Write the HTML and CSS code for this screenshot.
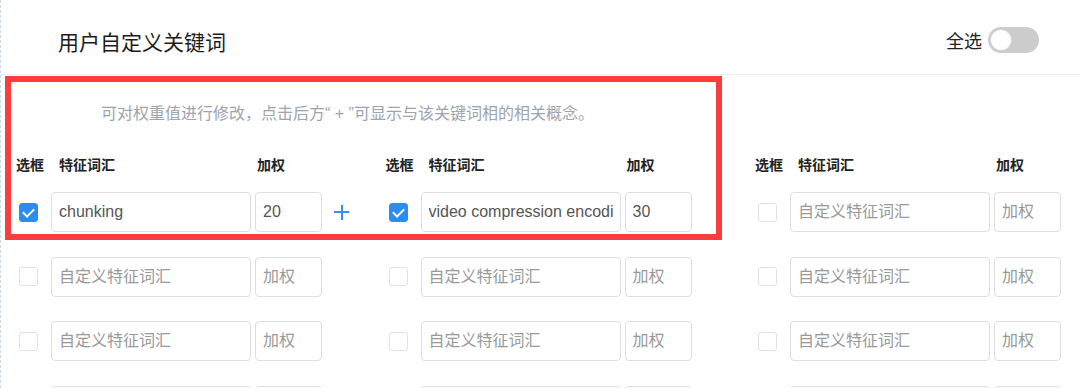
FILE: index.html
```html
<!DOCTYPE html>
<html lang="zh">
<head>
    <meta charset="UTF-8">
    <title>用户自定义关键词</title>
    <link rel="stylesheet" href="styles.css">
</head>
<body>
    <div class="page">
        <div class="header">
            <h2 class="title">用户自定义关键词</h2>
            <div class="select-all">
                <span>全选</span>
                <span class="switch"><span class="knob"></span></span>
            </div>
        </div>

        <div class="content">
            <p class="tip">可对权重值进行修改，点击后方“ + ”可显示与该关键词相的相关概念。</p>

            <div class="groups">
                <div class="group">
                    <div class="row head">
                        <span class="c-check">选框</span>
                        <span class="c-word">特征词汇</span>
                        <span class="c-weight">加权</span>
                    </div>
                    <div class="row">
                        <span class="c-check"><span class="box checked"></span></span>
                        <input class="word" type="text" value="chunking" placeholder="自定义特征词汇">
                        <input class="weight" type="text" value="20" placeholder="加权">
                        <span class="plus"></span>
                    </div>
                    <div class="row">
                        <span class="c-check"><span class="box"></span></span>
                        <input class="word" type="text" placeholder="自定义特征词汇">
                        <input class="weight" type="text" placeholder="加权">
                    </div>
                    <div class="row">
                        <span class="c-check"><span class="box"></span></span>
                        <input class="word" type="text" placeholder="自定义特征词汇">
                        <input class="weight" type="text" placeholder="加权">
                    </div>
                    <div class="row">
                        <span class="c-check"><span class="box"></span></span>
                        <input class="word" type="text" placeholder="自定义特征词汇">
                        <input class="weight" type="text" placeholder="加权">
                    </div>
                </div>

                <div class="group">
                    <div class="row head">
                        <span class="c-check">选框</span>
                        <span class="c-word">特征词汇</span>
                        <span class="c-weight">加权</span>
                    </div>
                    <div class="row">
                        <span class="c-check"><span class="box checked"></span></span>
                        <input class="word" type="text" value="video compression encoding" placeholder="自定义特征词汇">
                        <input class="weight" type="text" value="30" placeholder="加权">
                    </div>
                    <div class="row">
                        <span class="c-check"><span class="box"></span></span>
                        <input class="word" type="text" placeholder="自定义特征词汇">
                        <input class="weight" type="text" placeholder="加权">
                    </div>
                    <div class="row">
                        <span class="c-check"><span class="box"></span></span>
                        <input class="word" type="text" placeholder="自定义特征词汇">
                        <input class="weight" type="text" placeholder="加权">
                    </div>
                    <div class="row">
                        <span class="c-check"><span class="box"></span></span>
                        <input class="word" type="text" placeholder="自定义特征词汇">
                        <input class="weight" type="text" placeholder="加权">
                    </div>
                </div>

                <div class="group">
                    <div class="row head">
                        <span class="c-check">选框</span>
                        <span class="c-word">特征词汇</span>
                        <span class="c-weight">加权</span>
                    </div>
                    <div class="row">
                        <span class="c-check"><span class="box"></span></span>
                        <input class="word" type="text" placeholder="自定义特征词汇">
                        <input class="weight" type="text" placeholder="加权">
                    </div>
                    <div class="row">
                        <span class="c-check"><span class="box"></span></span>
                        <input class="word" type="text" placeholder="自定义特征词汇">
                        <input class="weight" type="text" placeholder="加权">
                    </div>
                    <div class="row">
                        <span class="c-check"><span class="box"></span></span>
                        <input class="word" type="text" placeholder="自定义特征词汇">
                        <input class="weight" type="text" placeholder="加权">
                    </div>
                    <div class="row">
                        <span class="c-check"><span class="box"></span></span>
                        <input class="word" type="text" placeholder="自定义特征词汇">
                        <input class="weight" type="text" placeholder="加权">
                    </div>
                </div>
            </div>
        </div>

        <div class="mark"></div>
    </div>
</body>
</html>
```

FILE: styles.css
```css
body {
    margin: 0;
    height: 388px;
    overflow: hidden;
    background: #fff;
    font-family: 'Liberation Sans', 'Noto Sans CJK SC', sans-serif;
    color: #222;
}
.page {
    position: relative;
    height: 388px;
    overflow: hidden;
    border-left: 1px dashed #cfd9e4;
    box-sizing: border-box;
}
.header {
    height: 75px;
    padding: 6px 41px 0 57px;
    box-sizing: border-box;
    display: flex;
    align-items: center;
    justify-content: space-between;
    border-bottom: 1px solid #eee;
}
.title {
    margin: 0;
    font-size: 21px;
    font-weight: normal;
    color: #1c1c1c;
    padding-top: 2px;
}
.select-all {
    display: flex;
    align-items: center;
    gap: 6px;
    font-size: 18px;
    color: #222;
}
.switch {
    width: 51px;
    height: 26px;
    border-radius: 13px;
    background: #ccc;
    display: flex;
    align-items: center;
    padding: 0 2px;
    box-sizing: border-box;
}
.knob {
    width: 22px;
    height: 22px;
    border-radius: 50%;
    background: #fff;
    box-sizing: border-box;
    border: 1px solid #d8d8d8;
}
.content {
    padding-top: 29px;
}
.tip {
    margin: 0 0 30px 100px;
    font-size: 16px;
    line-height: 20px;
    color: #9ca4ae;
}
.groups {
    display: flex;
    padding-left: 15px;
}
.group {
    flex: none;
    width: 369.5px;
    display: flex;
    flex-direction: column;
    gap: 24.5px;
}
.row {
    display: flex;
    align-items: center;
    height: 40px;
}
.row.head {
    height: 20px;
    margin-bottom: -6.5px;
    font-size: 14px;
    font-weight: bold;
    color: #222;
}
.c-check {
    width: 35px;
    flex: none;
    display: flex;
}
.head .c-word {
    width: 204px;
    padding-left: 8px;
    box-sizing: border-box;
}
.head .c-weight {
    padding-left: 2px;
}
.box {
    width: 19px;
    height: 19px;
    margin-left: 3px;
    border: 1px solid #dfe1e5;
    border-radius: 3px;
    background: #fff;
    box-sizing: border-box;
    position: relative;
}
.box.checked {
    background: #2d8cf0;
    border-color: #2d8cf0;
}
.box.checked::after {
    content: '';
    position: absolute;
    left: 5px;
    top: 2px;
    width: 5px;
    height: 9px;
    border: solid #fff;
    border-width: 0 2.5px 2.5px 0;
    transform: rotate(45deg);
}
input {
    flex: none;
    height: 40px;
    box-sizing: border-box;
    border: 1px solid #dcdee2;
    border-radius: 4px;
    padding: 0 7px;
    font-family: inherit;
    font-size: 16px;
    color: #555;
    background: #fff;
    outline: none;
}
input::placeholder {
    color: #999;
}
.word {
    width: 200px;
}
.weight {
    width: 67px;
    margin-left: 4px;
}
.plus {
    position: relative;
    flex: none;
    width: 15px;
    height: 15px;
    margin-left: 12px;
}
.plus::before,
.plus::after {
    content: '';
    position: absolute;
    background: #3a8ef0;
}
.plus::before {
    left: 0;
    top: 6.5px;
    width: 15px;
    height: 2px;
}
.plus::after {
    left: 6.5px;
    top: 0;
    width: 2px;
    height: 15px;
}
.mark {
    position: absolute;
    left: 4px;
    top: 76px;
    width: 717px;
    height: 164px;
    border: 6px solid #fd3d3d;
    box-sizing: border-box;
    pointer-events: none;
}
```
